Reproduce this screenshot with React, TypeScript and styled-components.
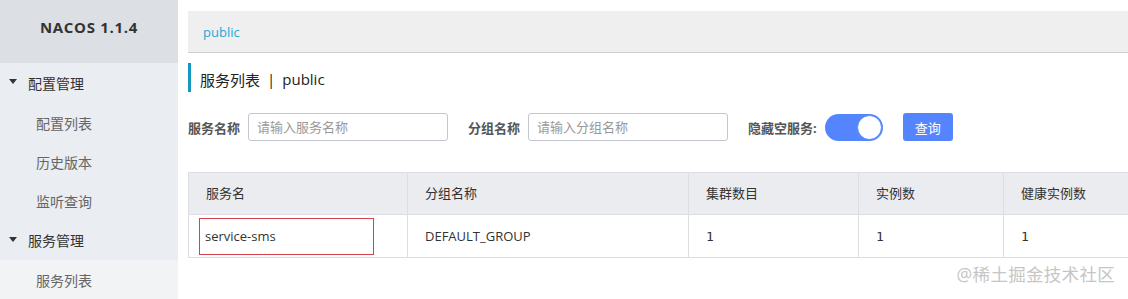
import React from 'react';
import styled, { createGlobalStyle } from 'styled-components';

const GlobalStyle = createGlobalStyle`
  html, body {
    margin: 0;
    padding: 0;
    background: #fff;
  }
  body {
    font-family: 'Open Sans', 'Noto Sans CJK SC', sans-serif;
    color: #333;
  }
  * {
    box-sizing: border-box;
  }
`;

const Layout = styled.div`
  position: relative;
  display: flex;
  height: 299px;
  overflow: hidden;
`;

const Sidebar = styled.aside`
  width: 178px;
  flex-shrink: 0;
  background: #eaedf1;
  display: flex;
  flex-direction: column;
`;

const Brand = styled.div`
  height: 64px;
  background: #dcdfe3;
  display: flex;
  align-items: center;
  justify-content: center;
  font-size: 15px;
  font-weight: 700;
  letter-spacing: 0.7px;
  color: #333;
  padding-bottom: 9px;
`;

const MenuGroup = styled.div`
  height: 40px;
  display: flex;
  align-items: center;
  padding-left: 9px;
  font-size: 14px;
  color: #333;
`;

const Caret = styled.span`
  width: 0;
  height: 0;
  border-left: 4px solid transparent;
  border-right: 4px solid transparent;
  border-top: 5px solid #333;
  margin-right: 11px;
  margin-top: -2px;
`;

const MenuItem = styled.div<{ $active?: boolean }>`
  height: 40px;
  display: flex;
  align-items: center;
  padding-left: 36px;
  padding-top: 1px;
  font-size: 14px;
  color: #666;
  background: ${p => (p.$active ? '#f2f3f5' : 'transparent')};
`;

const Main = styled.main`
  flex: 1;
  padding: 11px 0 0 10px;
  min-width: 0;
`;

const Breadcrumb = styled.div`
  height: 42px;
  background: #efefef;
  border-bottom: 1px solid #cfcfcf;
  display: flex;
  align-items: center;
  padding-left: 15px;
  padding-top: 1px;
  font-size: 13px;
  color: #2aa8d4;
`;

const PageTitle = styled.h1`
  margin: 10px 0 0;
  height: 29px;
  border-left: 3px solid #1498bf;
  padding: 3px 0 0 9px;
  display: flex;
  align-items: center;
  font-size: 15px;
  font-weight: 400;
  color: #222;
`;

const Divider = styled.span`
  margin: 0 7px;
`;

const FilterBar = styled.div`
  margin-top: 21px;
  display: flex;
  align-items: center;
  height: 28px;
`;

const FieldLabel = styled.label`
  font-size: 13px;
  font-weight: 700;
  color: #555;
  margin-right: 8px;
`;

const TextInput = styled.input`
  width: 200px;
  height: 28px;
  border: 1px solid #c4c6cf;
  border-radius: 3px;
  padding: 0 8px;
  font-family: inherit;
  font-size: 13px;
  margin-right: 20px;
  outline: none;
  &::placeholder {
    color: #999;
  }
`;

const Switch = styled.div<{ $on: boolean }>`
  width: 58px;
  height: 27px;
  border-radius: 14px;
  background: ${p => (p.$on ? '#5584ff' : '#e0e0e0')};
  display: flex;
  align-items: center;
  justify-content: ${p => (p.$on ? 'flex-end' : 'flex-start')};
  padding: 0 1px;
  margin-right: 20px;
`;

const Knob = styled.span`
  width: 25px;
  height: 25px;
  border-radius: 50%;
  background: #fff;
  border: 1px solid #5584ff;
`;

const Button = styled.button`
  width: 50px;
  height: 28px;
  border: none;
  border-radius: 3px;
  background: #5584ff;
  color: #fff;
  font-family: inherit;
  font-size: 13px;
`;

const Table = styled.table`
  margin-top: 31px;
  width: calc(100% + 20px);
  border-collapse: collapse;
  table-layout: fixed;
  font-size: 13px;
`;

const Th = styled.th`
  height: 42px;
  background: #ebecf0;
  border: 1px solid #dcdee3;
  text-align: left;
  font-weight: 400;
  color: #333;
  padding: 0 0 2px 17px;
`;

const Td = styled.td<{ $mono?: boolean }>`
  height: 43px;
  border: 1px solid #dcdee3;
  padding: 0 0 0 17px;
  color: #333;
  font-family: ${p => (p.$mono ? "'DejaVu Sans Mono', monospace" : 'inherit')};
`;

const NameCell = styled.td`
  height: 43px;
  border: 1px solid #dcdee3;
  padding: 2px 33px 2px 10px;
`;

const Highlight = styled.div`
  height: 37px;
  border: 1px solid #d4424c;
  display: flex;
  align-items: center;
  padding-left: 5px;
  color: #333;
`;

const Watermark = styled.div`
  position: absolute;
  right: 13px;
  bottom: 13px;
  font-size: 17.5px;
  color: #c6c6c6;
  letter-spacing: 0.3px;
`;

const columns = [
  { title: '服务名', width: 219 },
  { title: '分组名称', width: 281 },
  { title: '集群数目', width: 170 },
  { title: '实例数', width: 145 },
  { title: '健康实例数', width: undefined },
];

const services = [
  { name: 'service-sms', group: 'DEFAULT_GROUP', clusters: 1, instances: 1, healthy: 1 },
];

export default function App() {
  return (
    <>
      <GlobalStyle />
      <Layout>
        <Sidebar>
          <Brand>NACOS 1.1.4</Brand>
          <MenuGroup><Caret />配置管理</MenuGroup>
          <MenuItem>配置列表</MenuItem>
          <MenuItem>历史版本</MenuItem>
          <MenuItem>监听查询</MenuItem>
          <MenuGroup><Caret />服务管理</MenuGroup>
          <MenuItem $active>服务列表</MenuItem>
        </Sidebar>
        <Main>
          <Breadcrumb>public</Breadcrumb>
          <PageTitle>
            服务列表<Divider>|</Divider>public
          </PageTitle>
          <FilterBar>
            <FieldLabel>服务名称</FieldLabel>
            <TextInput placeholder="请输入服务名称" />
            <FieldLabel>分组名称</FieldLabel>
            <TextInput placeholder="请输入分组名称" />
            <FieldLabel>隐藏空服务:</FieldLabel>
            <Switch $on>
              <Knob />
            </Switch>
            <Button>查询</Button>
          </FilterBar>
          <Table>
            <colgroup>
              {columns.map(c => (
                <col key={c.title} style={c.width ? { width: c.width } : undefined} />
              ))}
            </colgroup>
            <thead>
              <tr>
                {columns.map(c => (
                  <Th key={c.title}>{c.title}</Th>
                ))}
              </tr>
            </thead>
            <tbody>
              {services.map(s => (
                <tr key={s.name}>
                  <NameCell>
                    <Highlight>{s.name}</Highlight>
                  </NameCell>
                  <Td>{s.group}</Td>
                  <Td $mono>{s.clusters}</Td>
                  <Td $mono>{s.instances}</Td>
                  <Td $mono>{s.healthy}</Td>
                </tr>
              ))}
            </tbody>
          </Table>
        </Main>
        <Watermark>@稀土掘金技术社区</Watermark>
      </Layout>
    </>
  );
}
